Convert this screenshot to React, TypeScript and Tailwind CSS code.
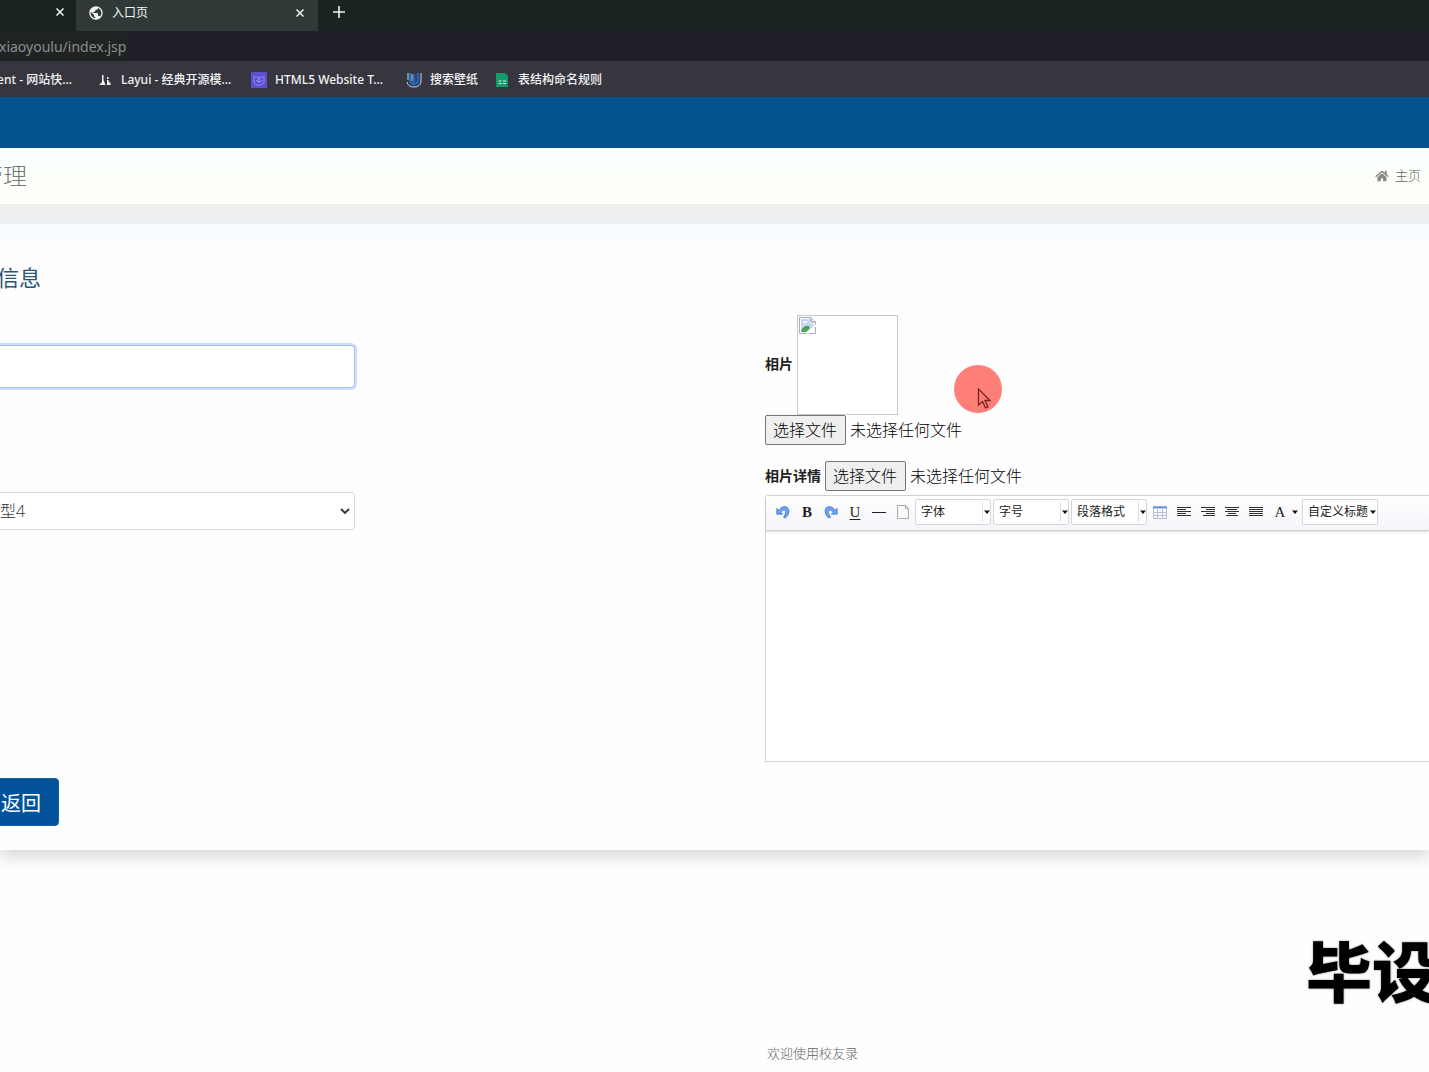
import type { ReactNode } from "react"
import { FaHome } from "react-icons/fa"
import { MdPublic } from "react-icons/md"

/**
 * Bookmark Component Props
 */
interface BookmarkProps {
  /** Favicon of the bookmark */
  icon: ReactNode
  /** Visible title */
  title: string
  /** Extra layout classes */
  className?: string
}

function Bookmark({ icon, title, className = "" }: BookmarkProps) {
  return (
    <a href="#" className={`flex shrink-0 items-center gap-2 whitespace-nowrap ${className}`}>
      <span className="flex h-4 w-4 items-center justify-center">{icon}</span>
      {title}
    </a>
  )
}

/** Tab strip, address bar and bookmarks of the browser */
function BrowserChrome() {
  return (
    <header className="font-['Noto_Sans','Noto_Sans_CJK_SC',sans-serif] text-xs text-[#f1f3f4]">
      <div className="flex h-[31px] items-start bg-[#1b2322]">
        <div className="flex h-6 w-[76px] items-center justify-end pr-3">
          <button type="button" aria-label="关闭">
            <CloseIcon />
          </button>
        </div>
        <div className="flex h-full w-[242px] items-center bg-[#303938] pr-[14px] pb-[6px] pl-3">
          <MdPublic className="h-4 w-4" />
          <span className="ml-2 flex-1">入口页</span>
          <button type="button" aria-label="关闭">
            <CloseIcon />
          </button>
        </div>
        <button type="button" aria-label="新标签页" className="ml-[14px] flex h-6 items-center">
          <svg width="14" height="14" viewBox="0 0 14 14" stroke="currentColor" strokeWidth="1.6">
            <path d="M7 1v12M1 7h12" />
          </svg>
        </button>
      </div>

      <div className="flex h-[30px] items-center bg-[#1f2029]">
        <span className="-ml-px flex h-full items-center bg-[#202323] pt-[2px] text-sm text-[#8b8e8d]">
          xiaoyoulu/index.jsp
        </span>
      </div>

      <nav className="flex h-9 items-center bg-[#37363f] pt-[2px] font-medium">
        <a href="#" className="flex w-[72px] justify-end overflow-hidden whitespace-nowrap">
          ent - 网站快...
        </a>
        <Bookmark
          className="ml-[25px] w-[137px]"
          title="Layui - 经典开源模..."
          icon={
            <svg width="12" height="12" viewBox="0 0 12 12" fill="currentColor">
              <path d="M3 1h1.500v5l2 5H0l3-3zM8 3h1.500v2H8zM8 6h1.500l.5 2.500h1.500V11H8z" />
            </svg>
          }
        />
        <Bookmark
          className="ml-[17px] w-[137px]"
          title="HTML5 Website T..."
          icon={
            <svg width="16" height="16" viewBox="0 0 16 16">
              <rect width="16" height="16" fill="#5b50cf" />
              <path d="M3 4l2 2 1.500-1h3L11 6l2-2v6l-2.500 3h-5L3 10z" fill="none" stroke="#8f89ee" />
              <path d="M5.500 8.500q2.500 3 5 0M8 6v2" fill="none" stroke="#b9b4fb" />
            </svg>
          }
        />
        <Bookmark
          className="ml-[18px]"
          title="搜索壁纸"
          icon={
            <svg width="16" height="16" viewBox="0 0 16 16" fill="none">
              <path d="M4 1v7q0 4 4 4t4-4V1M8 2v9" stroke="#2862b5" strokeWidth="2.500" />
              <path d="M1 10q1 5 7 5t7-5M15 1v9M2 1v7M6 2v7" stroke="#b9d6f0" />
            </svg>
          }
        />
        <Bookmark
          className="ml-4"
          title="表结构命名规则"
          icon={
            <svg width="14" height="15" viewBox="0 0 14 15">
              <path d="M1 0h9l3 3v10a1 1 0 0 1-1 1H1z" fill="#109d6b" />
              <path d="M3.500 8h3M8 8h3M3.500 10.500h3M8 10.500h3" stroke="#d5f5e8" strokeWidth="1.200" />
            </svg>
          }
        />
      </nav>
    </header>
  )
}

function CloseIcon() {
  return (
    <svg width="8" height="8" viewBox="0 0 8 8" stroke="currentColor" strokeWidth="1.5">
      <path d="M.5.5l7 7M7.500.5l-7 7" />
    </svg>
  )
}

/**
 * File picker: native input is hidden, its label acts as the button
 */
function FilePicker({ id }: { id: string }) {
  return (
    <>
      <input id={id} type="file" className="sr-only" />
      <label
        htmlFor={id}
        className="flex h-[30px] items-center rounded-xs border border-[#767676] bg-[#efefef] pr-2 pl-[7px] text-base font-light text-black"
      >
        选择文件
      </label>
      <span className="ml-1 text-base font-light text-black">未选择任何文件</span>
    </>
  )
}

/** Small black triangle used by the editor drop-downs */
function Caret() {
  return (
    <svg width="6" height="4" viewBox="0 0 6 4" className="shrink-0" fill="#111">
      <path d="M0 .5h6L3 4z" />
    </svg>
  )
}

function ToolbarSelect({ label, divided = true }: { label: string; divided?: boolean }) {
  return (
    <div className="flex h-[26px] w-[76px] items-center rounded-xs border border-[#d6d6da] bg-white">
      <select
        aria-label={label}
        className="min-w-0 flex-1 appearance-none overflow-hidden pl-[5px] text-xs text-[#222] outline-none"
      >
        <option>{label}</option>
      </select>
      <span className={`flex h-5 w-2 items-center justify-center ${divided ? "border-l border-[#ddd]" : ""}`}>
        <Caret />
      </span>
    </div>
  )
}

function ToolbarButton({ label, children }: { label: string; children: ReactNode }) {
  return (
    <button
      type="button"
      aria-label={label}
      className="flex h-6 w-6 items-center justify-center font-['Liberation_Serif',serif] text-[15px] text-[#222]"
    >
      {children}
    </button>
  )
}

function UndoIcon({ flip = false }: { flip?: boolean }) {
  return (
    <svg width="14" height="14" viewBox="0 0 14 14" className={flip ? "-scale-x-100" : ""}>
      <path
        d="M.8 3.500v5.700h6L5 7.300Q7 4 9 5.300t-1.500 6.900l2 .8Q13.500 9 13 5.500 12.200 1.500 8.500 1.500 5 1.600 3 5.300z"
        fill="#6ea2ee"
        stroke="#4479c9"
        strokeWidth=".8"
      />
    </svg>
  )
}

/** Text lines icon, each line given as [start, end] */
function LinesIcon({ lines }: { lines: number[][] }) {
  return (
    <svg width="15" height="12" viewBox="0 0 15 12" stroke="#333" shapeRendering="crispEdges">
      {lines.map(([from, to], index) => (
        <path key={index} d={`M${from} ${index * 2 + 1.5}H${to}`} />
      ))}
    </svg>
  )
}

/** Rich text editor with its toolbar */
function Editor() {
  return (
    <div className="mt-1 rounded-tl border border-r-0 border-[#d4d4dc] bg-white">
      <div className="flex h-[35px] items-center border-b border-[#cfcfd6] bg-gradient-to-b from-white to-[#f4f4f9] pb-[2px] pl-[5px] shadow-sm">
        <ToolbarButton label="撤销">
          <UndoIcon />
        </ToolbarButton>
        <ToolbarButton label="加粗">
          <span className="font-bold">B</span>
        </ToolbarButton>
        <ToolbarButton label="重做">
          <UndoIcon flip />
        </ToolbarButton>
        <ToolbarButton label="下划线">
          <span className="underline underline-offset-2">U</span>
        </ToolbarButton>
        <ToolbarButton label="分隔线">
          <span className="h-px w-[14px] bg-[#222]" />
        </ToolbarButton>
        <ToolbarButton label="新建">
          <svg width="12" height="14" viewBox="0 0 12 14" fill="#fafafa" stroke="#aaa">
            <path d="M.5.5h8l3 3v10H.5zM8.500.5v3h3" />
          </svg>
        </ToolbarButton>
        <div className="flex gap-[2px] pr-px">
          <ToolbarSelect label="字体" />
          <ToolbarSelect label="字号" />
          <ToolbarSelect label="段落格式" />
        </div>
        <ToolbarButton label="表格">
          <svg width="14" height="13" viewBox="0 0 14 13" fill="none">
            <path d="M.5.5h13v12H.5zM.5 6.500h13M.5 9.500h13M4.500 3v9M9.500 3v9" stroke="#b7bfd6" />
            <path d="M0 1.500h14" stroke="#6f92dc" strokeWidth="2" />
          </svg>
        </ToolbarButton>
        <ToolbarButton label="左对齐">
          <LinesIcon lines={[[0, 14], [0, 9], [0, 14], [0, 9], [0, 14]]} />
        </ToolbarButton>
        <ToolbarButton label="右对齐">
          <LinesIcon lines={[[0, 14], [5, 14], [0, 14], [5, 14], [2, 14]]} />
        </ToolbarButton>
        <ToolbarButton label="居中">
          <LinesIcon lines={[[0, 14], [2, 12], [0, 14], [3, 11], [1, 13]]} />
        </ToolbarButton>
        <ToolbarButton label="两端对齐">
          <LinesIcon lines={[[0, 14], [0, 14], [0, 14], [0, 14], [0, 14]]} />
        </ToolbarButton>
        <ToolbarButton label="字体颜色">A</ToolbarButton>
        <span className="mr-1">
          <Caret />
        </span>
        <ToolbarSelect label="自定义标题" divided={false} />
      </div>
      <textarea aria-label="相片详情" className="block h-[230px] w-full resize-none outline-none" />
    </div>
  )
}

/** Left column of the form */
function LeftFields() {
  return (
    <div className="w-[355px] shrink-0 pt-[30px]">
      <input
        type="text"
        aria-label="名称"
        className="-ml-2 block h-[43px] w-[363px] rounded border border-[#9cc3ef] bg-white px-3 ring-2 ring-[#cfdcfa] outline-none"
      />
      <div className="mt-[104px] -ml-2 flex h-[38px] items-center rounded border border-[#d9d9dc] bg-white pr-1 pl-[7px]">
        <select aria-label="类型" className="h-full flex-1 appearance-none text-base font-light text-[#333] outline-none">
          <option>型4</option>
        </select>
        <svg width="10" height="7" viewBox="0 0 10 7" fill="none" stroke="#333" strokeWidth="1.8">
          <path d="M1 1l4 4 4-4" />
        </svg>
      </div>
    </div>
  )
}

/** Right column: photo, uploads and the editor */
function RightFields() {
  return (
    <div className="ml-[410px] min-w-0 flex-1">
      <div className="flex items-center text-sm font-bold text-[#222]">
        <span className="pb-[2px]">相片</span>
        <div role="img" aria-label="相片" className="ml-1 h-[100px] w-[101px] border border-[#c8c8d2] bg-white p-px">
          <svg width="17" height="17" viewBox="0 0 17 17">
            <path d="M.5.5H12l4.500 4.500v11.500H.5z" fill="#fff" stroke="#a9adb6" />
            <path d="M2 2h9v4l4 1v3L8 15H2z" fill="#c5d7f6" />
            <path d="M2 15q1-5 5-6 3-1 4 2l-4 4z" fill="#4ba352" />
            <path d="M4 5q2-2 4 0v1H4z" fill="#fff" />
            <path d="M17 8L8 17" stroke="#fff" strokeWidth="2" />
            <path d="M12 .5V5h4.500" fill="#eee" stroke="#8a8e96" />
          </svg>
        </div>
      </div>
      <div className="flex items-center">
        <FilePicker id="photo" />
      </div>
      <div className="mt-4 flex items-center">
        <span className="mr-1 text-sm font-bold text-[#222]">相片详情</span>
        <FilePicker id="photo-detail" />
      </div>
      <Editor />
    </div>
  )
}

export default function App() {
  return (
    <div className="relative flex min-h-screen flex-col overflow-hidden bg-[#fefefe] font-['Open_Sans','Noto_Sans_CJK_SC',sans-serif]">
      <BrowserChrome />
      <div className="h-[51px] bg-[#04538f]" />

      {/* Page title and breadcrumb */}
      <div className="flex h-14 items-center justify-between bg-gradient-to-b from-[#f8feff] via-[#fcfff9] to-[#fdfffa] pr-2 pb-px">
        <h1 className="-ml-[21px] text-2xl font-light text-[#777]">管理</h1>
        <a href="#" className="flex items-center gap-[6px] text-[13px] font-light text-[#666]">
          <FaHome className="h-3 w-[14px] text-[#888]" />
          主页
        </a>
      </div>
      <div className="relative h-5 bg-gradient-to-b from-[#efefed] to-[#ecf0f6]" />

      {/* Form card */}
      <main className="bg-gradient-to-b from-[#f8fcff] via-[#fefefe] via-5% to-[#fefefe] pt-9 pb-6 shadow-[0_6px_16px_rgba(40,40,60,0.2)]">
        <h2 className="-ml-[3px] h-[34px] text-[22px] leading-[34px] text-[#2b5478]">信息</h2>
        <form className="mt-[21px]">
          <div className="flex">
            <LeftFields />
            <RightFields />
          </div>
          <button
            type="button"
            className="mt-4 -ml-4 h-12 rounded border border-[#1261a5] bg-[#04539a] pt-[3px] pr-[17px] pl-4 text-xl text-white"
          >
            返回
          </button>
        </form>
      </main>

      <footer className="mt-auto pb-[9px] pl-[767px] text-[13px] leading-5 font-light text-[#666]">欢迎使用校友录</footer>

      {/* Video caption */}
      <div className="absolute top-[920px] left-[1306px] font-['Noto_Sans_CJK_SC',sans-serif] text-[66px] leading-[96px] font-black whitespace-nowrap text-black [text-shadow:0_0_2px_#777]">
        毕设
      </div>

      {/* Highlighted mouse pointer */}
      <div className="pointer-events-none absolute top-[365px] left-[954px] h-12 w-12 rounded-full bg-[#fd7f78]">
        <svg width="48" height="48" viewBox="0 0 48 48" fill="#fd7f78" stroke="#7c1f1c" strokeWidth="1.300">
          <path d="M24.500 24v16l4-3.500 3 6.500 2.500-1-3-6.500h5z" />
        </svg>
      </div>
    </div>
  )
}
